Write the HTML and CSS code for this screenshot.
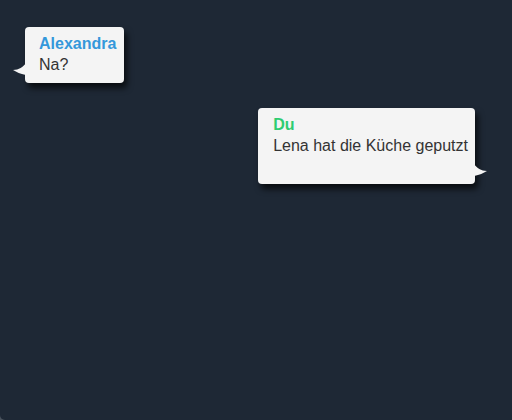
FILE: index.html
```html
<!DOCTYPE html>
<html lang="de">
<head>
<meta charset="utf-8">
<title>Chat</title>
<link rel="stylesheet" href="styles.css">
</head>
<body>
<div class="chat">
  <div class="msg msg-in">
    <svg class="tail tail-left" width="13" height="12" viewBox="0 0 13 12"><path d="M13 0 C10 4 6 7 0 7 C4 9 7 11 13 12 Z" fill="#f4f4f4"/></svg>
    <div class="name name-blue">Alexandra</div>
    <div class="text">Na?</div>
  </div>
  <div class="msg msg-out">
    <svg class="tail tail-right" width="13" height="12" viewBox="0 0 13 12"><path d="M0 0 C3 4 7 7 13 7 C9 9 6 11 0 12 Z" fill="#f4f4f4"/></svg>
    <div class="name name-green">Du</div>
    <div class="text">Lena hat die Küche geputzt</div>
    <div class="meta"></div>
  </div>
</div>
</body>
</html>
```
FILE: styles.css
```css
html, body {
  margin: 0;
  padding: 0;
  background: #4a535d;
}
.chat {
  box-sizing: border-box;
  width: 512px;
  height: 420px;
  background: #1e2835;
  border-bottom-left-radius: 5px;
  display: flex;
  flex-direction: column;
  align-items: flex-start;
  padding: 27px 37px 0 25px;
  gap: 25px;
  font-family: "Liberation Sans", Arial, sans-serif;
  font-size: 16px;
  line-height: 21px;
}
.msg {
  position: relative;
  background: #f4f4f4;
  border-radius: 4px;
  padding: 6px 8px 8px 14px;
  box-shadow: 3px 5px 6px rgba(0, 0, 0, 0.7);
  color: #333;
}
.msg-out {
  align-self: flex-end;
  padding-left: 15px;
  padding-right: 7px;
}
.name {
  font-weight: bold;
}
.name-blue { color: #3498db; }
.name-green { color: #2ecc71; }
.meta {
  height: 20px;
}
.tail {
  position: absolute;
  display: block;
}
.tail-left {
  left: -12px;
  bottom: 8px;
}
.tail-right {
  right: -12px;
  bottom: 8px;
}
```
